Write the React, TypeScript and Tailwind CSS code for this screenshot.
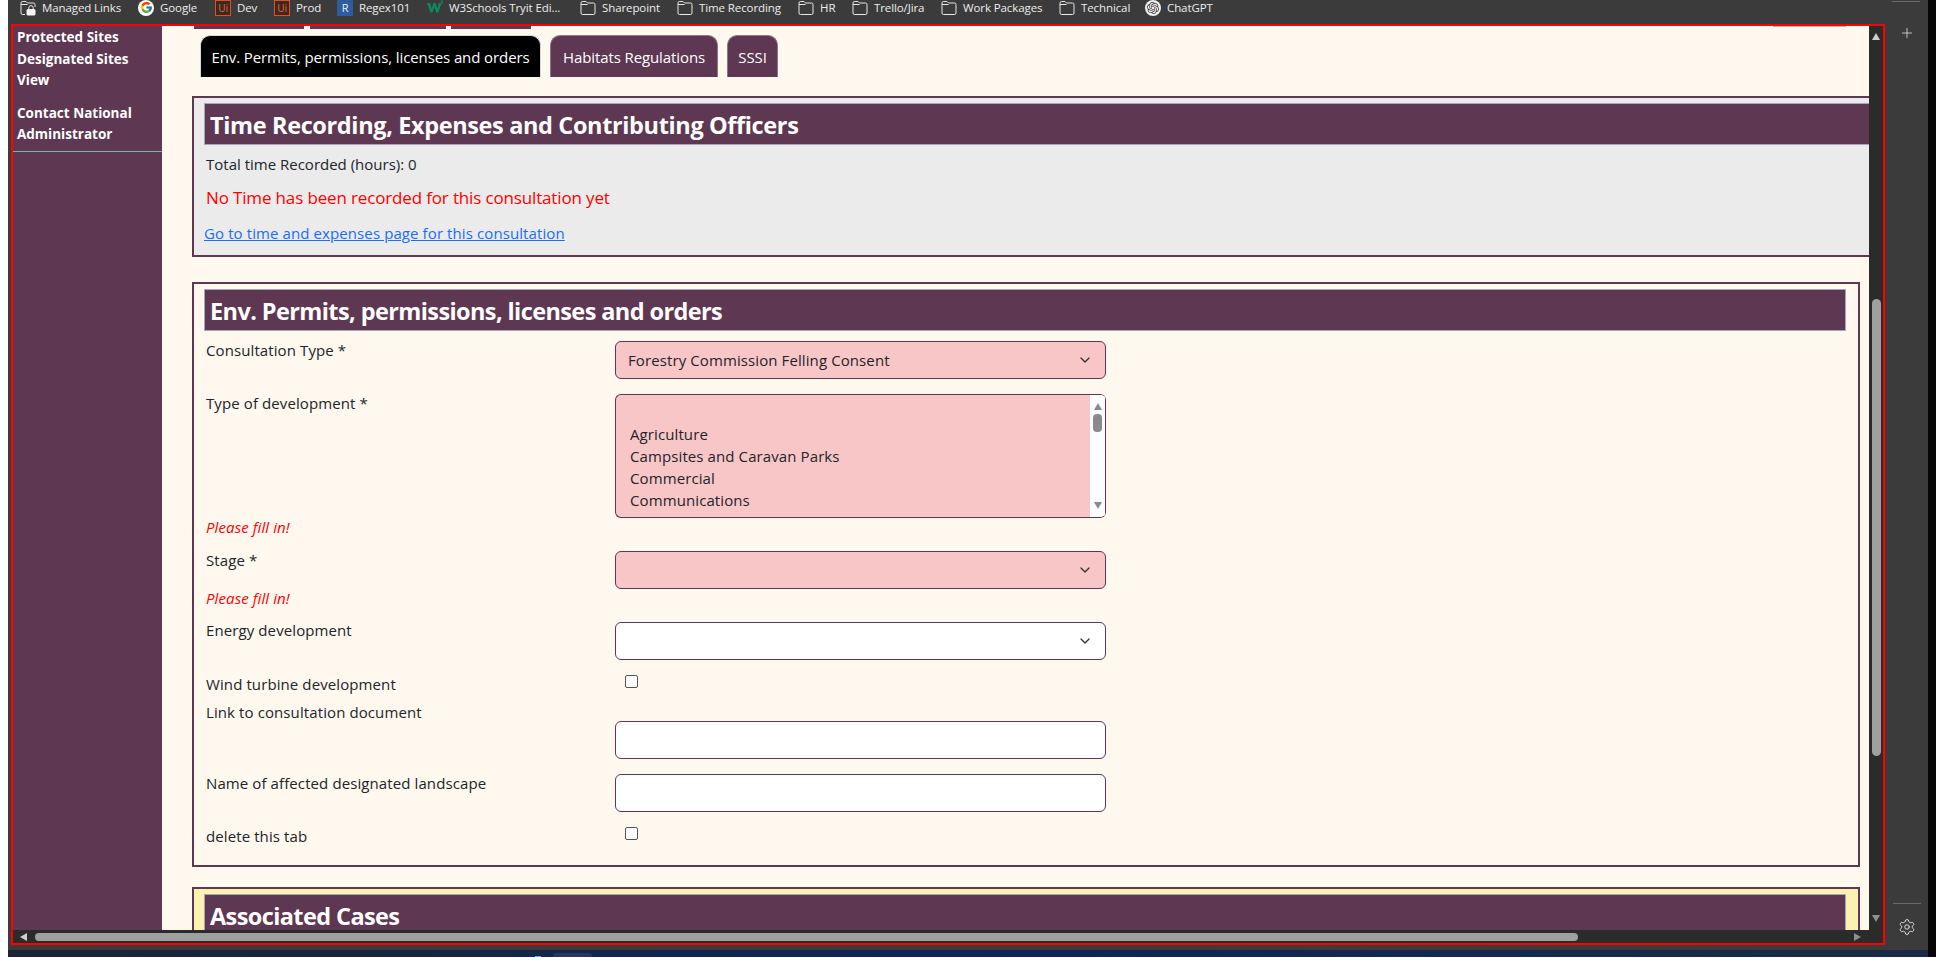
import type { ReactNode } from 'react'
import { ChevronDown, Plus, Settings } from 'lucide-react'
import { FcGoogle } from 'react-icons/fc'
import { SiOpenai } from 'react-icons/si'

const font = "font-['Open_Sans','Noto_Sans',sans-serif]"

function FolderIcon() {
  return (
    <svg viewBox="0 0 16 16" className="h-4 w-4 shrink-0" fill="none" stroke="#e8e8e8" strokeWidth="1">
      <path d="M1 3a1.500 1.500 0 0 1 1.500-1.500h3.500l1.500 1.500h6A1.500 1.500 0 0 1 15 4.500V13a1.500 1.500 0 0 1-1.500 1.500h-11A1.500 1.500 0 0 1 1 13z" />
      <path d="M1 4.500h6.500" />
    </svg>
  )
}

function ManagedIcon() {
  return (
    <svg viewBox="0 0 16 16" className="h-4 w-4 shrink-0" fill="none" stroke="#e8e8e8" strokeWidth="1">
      <path d="M5 14.500H2.500A1.500 1.500 0 0 1 1 13V3a1.500 1.500 0 0 1 1.500-1.500H6L7.500 3h6A1.500 1.500 0 0 1 15 4.500V7" />
      <path d="M1 4.500h6.500" />
      <rect x="6.500" y="9" width="9" height="6.500" rx="1.500" fill="#f4f4f4" stroke="none" />
      <path d="M8.800 9V7.800a2.200 2.200 0 0 1 4.400 0V9" />
    </svg>
  )
}

function GoogleIcon() {
  return (
    <div className="flex h-4 w-4 shrink-0 items-center justify-center rounded-full bg-white">
      <FcGoogle className="h-[13px] w-[13px]" />
    </div>
  )
}

function ChatIcon() {
  return (
    <div className="flex h-4 w-4 shrink-0 items-center justify-center rounded-full bg-[#efefef]">
      <SiOpenai className="h-[12px] w-[12px] text-[#3d3d3d]" />
    </div>
  )
}

function UiIcon() {
  return (
    <div className="flex h-4 w-4 shrink-0 items-center justify-center border border-[#e2501f] bg-[#3b2a24] text-[10px] leading-none text-[#f0602a]">
      Ui
    </div>
  )
}

function RegexIcon() {
  return (
    <div className="flex h-4 w-4 shrink-0 items-center justify-center bg-[#2f5c9e] text-[11px] leading-none text-[#e8eef8]">
      R
    </div>
  )
}

function W3Icon() {
  return (
    <svg viewBox="0 0 16 16" className="h-4 w-4 shrink-0" fill="#0d8a5b">
      <path d="M0 3h3l1.700 5.500L6.500 3h2l1.800 5.500L12 3h2.500l-3.200 9.500h-2L7.400 7l-1.900 5.500h-2z" />
      <path d="M13.500 0.500H16v.9l-1 1.100c.7.200 1 .7 1 1.300h-1c0-.4-.3-.6-.7-.6l-.3-.6.900-1.200h-1.400z" />
    </svg>
  )
}

const bookmarks: { icon: ReactNode; label: string; textClass: string }[] = [
  { icon: <ManagedIcon />, label: 'Managed Links', textClass: 'w-[79px]' },
  { icon: <GoogleIcon />, label: 'Google', textClass: 'w-[38px]' },
  { icon: <UiIcon />, label: 'Dev', textClass: 'w-[20px]' },
  { icon: <UiIcon />, label: 'Prod', textClass: 'w-[24px]' },
  { icon: <RegexIcon />, label: 'Regex101', textClass: 'w-[51px]' },
  { icon: <W3Icon />, label: 'W3Schools Tryit Edi...', textClass: 'w-[114px]' },
  { icon: <FolderIcon />, label: 'Sharepoint', textClass: 'w-[58px]' },
  { icon: <FolderIcon />, label: 'Time Recording', textClass: 'w-[82px]' },
  { icon: <FolderIcon />, label: 'HR', textClass: 'w-[15px]' },
  { icon: <FolderIcon />, label: 'Trello/Jira', textClass: 'w-[50px]' },
  { icon: <FolderIcon />, label: 'Work Packages', textClass: 'w-[79px]' },
  { icon: <FolderIcon />, label: 'Technical', textClass: 'w-[47px]' },
  { icon: <ChatIcon />, label: 'ChatGPT', textClass: 'w-[45px]' },
]

function BookmarkBar() {
  return (
    <div className="flex h-[24px] items-start gap-[17px] pl-[12px] text-[11.500px] leading-[14px] tracking-[-0.1px] text-[#ededed]">
      {bookmarks.map((b, i) => (
        <div key={i} className="flex h-[15px] items-center gap-[6px]">
          {b.icon}
          <span className={`${b.textClass} whitespace-nowrap`}>{b.label}</span>
        </div>
      ))}
      <div className="ml-auto mr-[8px] mt-[1px] h-px w-[28px] bg-[#6b6b6b]" />
    </div>
  )
}

function Sidebar() {
  return (
    <div className="w-[149px] shrink-0 bg-[#5e3752] pt-[1px] text-[13.500px] font-bold leading-[21.500px] text-white">
      <div className="pl-[4px]">
        <div>Protected Sites</div>
        <div>Designated Sites</div>
        <div>View</div>
        <div className="mt-[11px]">Contact National</div>
        <div>Administrator</div>
      </div>
      <div className="mt-[5px] h-px bg-[#74b5a6]" />
    </div>
  )
}

function Tab({ label, active, className }: { label: string; active?: boolean; className: string }) {
  return (
    <div
      className={`flex h-[42px] items-center justify-center rounded-t-[10px] border border-b-0 text-[15px] tracking-[-0.1px] text-white ${
        active ? 'border-[#d8d8d8] bg-black' : 'border-[#8a7a86] bg-[#5e3752]'
      } ${className}`}
    >
      {label}
    </div>
  )
}

function Heading({ children, className }: { children: ReactNode; className: string }) {
  return (
    <div
      className={`ml-[10px] flex h-[42px] items-center border border-[#a5a5bb] bg-[#5e3752] pl-[5px] pt-[2px] text-[23.500px] font-bold text-white ${className}`}
    >
      {children}
    </div>
  )
}

function Dropdown({ value, tone }: { value?: string; tone: string }) {
  return (
    <div
      className={`flex h-[38px] w-[491px] items-center justify-between rounded-[6px] border border-[#5e3752] pl-[12px] pr-[12px] ${tone}`}
    >
      <span>{value}</span>
      <ChevronDown size={16} strokeWidth={2} className="text-[#333]" />
    </div>
  )
}

function TextBox() {
  return <input readOnly className="block h-[38px] w-[491px] rounded-[6px] border border-[#5e3752] bg-white" />
}

function CheckBox() {
  return (
    <input
      type="checkbox"
      readOnly
      className="ml-[10px] mt-[2px] block h-[13px] w-[13px] appearance-none rounded-[2px] border border-[#555] bg-white"
    />
  )
}

function Row({ label, children, className = '' }: { label: string; children: ReactNode; className?: string }) {
  return (
    <div className={`grid grid-cols-[409px_491px] pl-[12px] ${className}`}>
      <div>{label}</div>
      <div>{children}</div>
    </div>
  )
}

function ListBox() {
  return (
    <div className="flex h-[124px] w-[491px] overflow-hidden rounded-[6px] border border-r-0 border-[#5e3752] bg-[#f9c6c7]">
      <div className="flex-1 pl-[14px] pt-[6px]">
        <div className="h-[22px]" />
        <div>Agriculture</div>
        <div>Campsites and Caravan Parks</div>
        <div>Commercial</div>
        <div>Communications</div>
      </div>
      <div className="flex w-[16px] flex-col items-center border-r border-[#5e3752] bg-white pt-[8px]">
        <div className="h-0 w-0 border-x-[4px] border-b-[7px] border-x-transparent border-b-[#8a8a8a]" />
        <div className="mt-[4px] h-[18px] w-[9px] rounded-[4px] bg-[#8a8a8a]" />
        <div className="mt-auto mb-[8px] h-0 w-0 border-x-[4px] border-t-[7px] border-x-transparent border-t-[#8a8a8a]" />
      </div>
    </div>
  )
}

function Content() {
  return (
    <div className="min-w-0 flex-1 overflow-hidden bg-[#fff8ef] text-[15px] leading-[22px] tracking-[0.1px] text-[#212529]">
      {/* tail of the tab row above, scrolled away */}
      <div className="flex h-[3px] items-start">
        <div className="ml-[32px] h-[3px] w-[110px] bg-[#5e3752]" />
        <div className="ml-[6px] h-[3px] w-[136px] bg-[#5e3752]" />
        <div className="ml-[5px] h-[3px] w-[80px] bg-[#5e3752]" />
        <div className="ml-[1242px] h-px w-[73px] bg-[#b9b2ad]" />
      </div>

      <div className="ml-[38px] mt-[6px] flex gap-[9px]">
        <Tab label="Env. Permits, permissions, licenses and orders" active className="w-[341px]" />
        <Tab label="Habitats Regulations" className="w-[168px]" />
        <Tab label="SSSI" className="w-[51px]" />
      </div>

      <div className="ml-[30px] mt-[19px] h-[161px] w-[1720px] border-2 border-[#5e3752] bg-[#ebebeb] pt-[5px]">
        <Heading className="w-[1700px] tracking-[-0.37px]">Time Recording, Expenses and Contributing Officers</Heading>
        <div className="ml-[10px] mt-[8px] pl-[2px] tracking-normal">Total time Recorded (hours): 0</div>
        <div className="mt-[12px] pl-[12px] text-[17px] tracking-[-0.15px] text-[#ff0000]">
          No Time has been recorded for this consultation yet
        </div>
        <div className="mt-[13px] pl-[10px]">
          <a href="#" className="text-[#1a6cff] underline">
            Go to time and expenses page for this consultation
          </a>
        </div>
      </div>

      <div className="ml-[30px] mt-[25px] h-[585px] w-[1668px] border-2 border-[#5e3752] pt-[5px]">
        <Heading className="w-[1642px] tracking-[-0.6px]">Env. Permits, permissions, licenses and orders</Heading>
        <Row label="Consultation Type *" className="mt-[8px]">
          <div className="mt-[2px]">
            <Dropdown value="Forestry Commission Felling Consent" tone="bg-[#f9c6c7]" />
          </div>
        </Row>
        <Row label="Type of development *" className="mt-[13px]">
          <div className="mt-[2px]">
            <ListBox />
          </div>
        </Row>
        <div className="-mt-[2px] pl-[12px] italic text-[#ff0000]">Please fill in!</div>
        <Row label="Stage *" className="mt-[11px]">
          <div className="mt-[2px]">
            <Dropdown tone="bg-[#f9c6c7]" />
          </div>
        </Row>
        <div className="-mt-[2px] pl-[12px] italic text-[#ff0000]">Please fill in!</div>
        <Row label="Energy development" className="mt-[10px]">
          <div className="mt-[3px]">
            <Dropdown tone="bg-white" />
          </div>
        </Row>
        <Row label="Wind turbine development" className="mt-[13px]">
          <CheckBox />
        </Row>
        <Row label="Link to consultation document" className="mt-[6px]">
          <div className="pt-[20px]">
            <TextBox />
          </div>
        </Row>
        <Row label="Name of affected designated landscape" className="mt-[13px]">
          <div className="mt-[2px]">
            <TextBox />
          </div>
        </Row>
        <Row label="delete this tab" className="mt-[13px]">
          <CheckBox />
        </Row>
      </div>

      <div className="ml-[30px] mt-[20px] h-[200px] w-[1668px] border-2 border-[#5e3752] bg-[#fbf1b0] pt-[5px]">
        <Heading className="w-[1642px] tracking-[-0.6px]">Associated Cases</Heading>
      </div>
    </div>
  )
}

function VerticalScrollbar() {
  return (
    <div className="flex w-[14px] shrink-0 flex-col items-center bg-[#2b2b2b] pt-[7px]">
      <div className="h-0 w-0 border-x-[4.500px] border-b-[7px] border-x-transparent border-b-[#cfcfcf]" />
      <div className="mt-[259px] h-[457px] w-[9px] rounded-[5px] bg-[#a0a0a0]" />
      <div className="mt-auto mb-[8px] h-0 w-0 border-x-[4.500px] border-t-[7px] border-x-transparent border-t-[#8f8f8f]" />
    </div>
  )
}

function HorizontalScrollbar() {
  return (
    <div className="flex h-[13px] shrink-0 items-center bg-[#2b2b2b] pl-[7px]">
      <div className="h-0 w-0 border-y-[4.500px] border-r-[7px] border-y-transparent border-r-[#cfcfcf]" />
      <div className="ml-[8px] h-[8px] w-[1543px] rounded-[4px] bg-[#a0a0a0]" />
      <div className="ml-[276px] h-0 w-0 border-y-[4.500px] border-l-[7px] border-y-transparent border-l-[#8f8f8f]" />
    </div>
  )
}

function RightRail() {
  return (
    <div className="flex w-[43px] shrink-0 flex-col items-center">
      <Plus size={16} strokeWidth={1.2} className="mt-[1px] text-[#e0e0e0]" />
      <div className="mt-auto h-px w-[28px] bg-[#6b6b6b]" />
      <Settings size={18} strokeWidth={1.3} className="mb-[9px] mt-[14px] text-[#e0e0e0]" />
    </div>
  )
}

function TaskbarSliver() {
  return (
    <div className="flex h-[7px] items-end bg-gradient-to-r from-[#1b2435] via-[#10245a] to-[#1b2a44]">
      <div className="ml-[527px] h-px w-[6px] bg-[#4fb4f0]" />
      <div className="ml-[12px] h-[4px] w-[39px] rounded-t-[3px] bg-[#27355f]" />
    </div>
  )
}

export default function App() {
  return (
    <div className={`flex h-[970px] w-[1936px] flex-col overflow-hidden bg-white ${font}`}>
      <div className="flex h-[957px] pl-[8px]">
        <div className="flex w-[1920px] flex-col">
          <div className="flex h-[950px] flex-col bg-[#3b3b3b]">
            <BookmarkBar />
            <div className="flex h-[921px]">
              <div className="ml-[3px] flex w-[1874px] flex-col border-2 border-[#ff0000]">
                <div className="flex min-h-0 flex-1">
                  <Sidebar />
                  <Content />
                  <VerticalScrollbar />
                </div>
                <HorizontalScrollbar />
              </div>
              <RightRail />
            </div>
          </div>
          <TaskbarSliver />
        </div>
        <div className="w-[8px] bg-[#060606]" />
      </div>
    </div>
  )
}
